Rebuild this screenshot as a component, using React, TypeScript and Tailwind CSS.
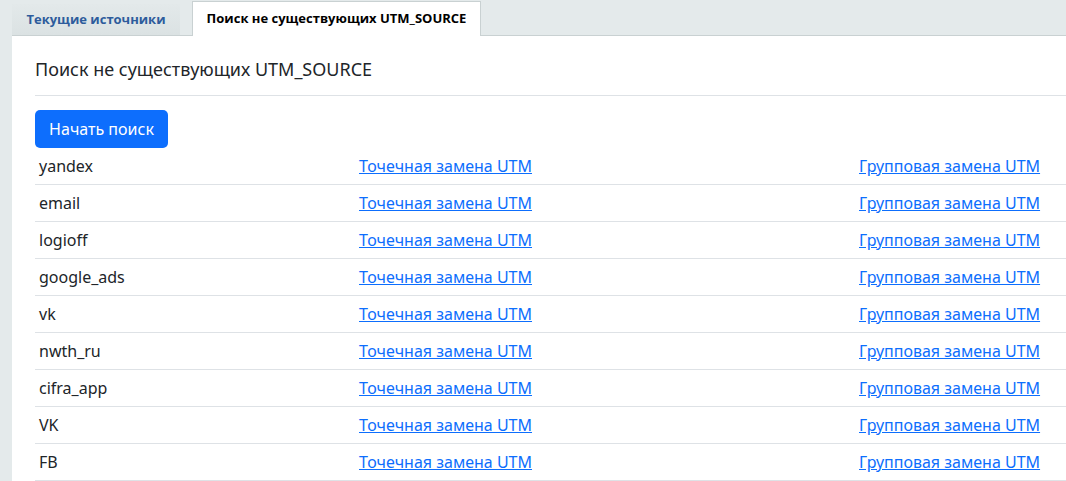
const sources = ["yandex", "email", "logioff", "google_ads", "vk", "nwth_ru", "cifra_app", "VK", "FB"];

const App = () => {
  return (
    <div className="min-h-screen bg-[#e4eaeb] pl-3 font-['Noto_Sans',sans-serif] text-[#212529] overflow-hidden">
      {/* вкладки */}
      <div className="flex items-end h-[36px] border-b border-[#c9d1d2]">
        <div className="h-[31px] w-[168px] flex items-center justify-center bg-gradient-to-b from-[#e3e9ea] to-[#dbe2e3] font-['Open_Sans',sans-serif] font-bold text-[13px] text-[#2d5c9c]">
          Текущие источники
        </div>
        <div className="ml-[12px] h-[35px] w-[289px] -mb-px flex items-center justify-center bg-white border border-b-0 border-[#c9d1d2] font-['Open_Sans',sans-serif] font-bold text-[13px] text-black">
          Поиск не существующих UTM_SOURCE
        </div>
      </div>

      <div className="bg-white pl-[23px] pt-[20px]">
        <h3 className="text-[18px] leading-[26px] pb-[13px] border-b border-[#dee2e6]">
          Поиск не существующих UTM_SOURCE
        </h3>
        <button className="mt-[14px] h-[38px] px-[13px] w-[133px] rounded-[5px] bg-[#0d6efd] text-white text-[16px]">
          Начать поиск
        </button>
        <div className="flex flex-col">
          {sources.map((s) => (
            <div key={s} className="grid grid-cols-[320px_500px_1fr] h-[37px] items-center border-b border-[#dee2e6] px-1 text-[16px]">
              <span>{s}</span>
              <a href="#" className="text-[#0d6efd] underline">Точечная замена UTM</a>
              <a href="#" className="text-[#0d6efd] underline">Групповая замена UTM</a>
            </div>
          ))}
        </div>
      </div>
    </div>
  );
};

export default App;
